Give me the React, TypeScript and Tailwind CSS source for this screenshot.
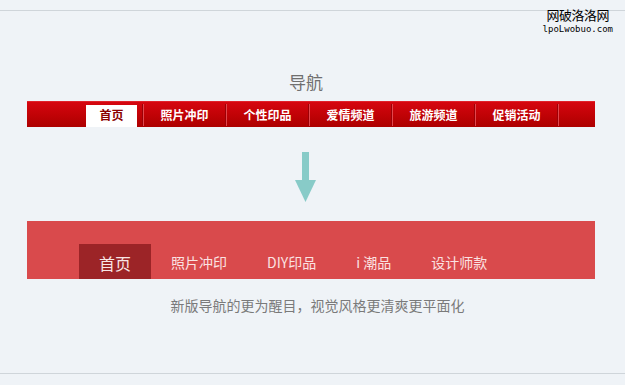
const oldNav = ['照片冲印', '个性印品', '爱情频道', '旅游频道', '促销活动'];
const newNav = ['照片冲印', 'DIY印品', 'i 潮品', '设计师款'];

function Separator() {
  return (
    <div className="flex h-[22px] self-center">
      <div className="w-px bg-[#9c0006]" />
      <div className="w-px bg-[#e2474d]" />
    </div>
  );
}

export default function App() {
  return (
    <div
      className="relative w-[625px] h-[385px] overflow-hidden bg-[#eff3f7] flex flex-col"
      style={{ fontFamily: '"Noto Sans CJK SC", "Noto Sans", sans-serif' }}
    >
      <div className="h-[10px] shrink-0" />
      <div className="h-px bg-[#cfd5da] shrink-0" />

      {/* watermark */}
      <div className="absolute right-[12px] top-[7px] flex flex-col items-center text-black">
        <span className="text-[13px] leading-[15px] tracking-[-0.5px]">网破洛洛网</span>
        <span
          className="text-[9px] leading-[11px] mt-[2px]"
          style={{ fontFamily: '"DejaVu Sans Mono", monospace' }}
        >
          lpoLwobuo.com
        </span>
      </div>

      <div className="mt-[61px] h-[20px] pr-[13px] text-center text-[17px] leading-[20px] text-[#6f6f6f]">
        导航
      </div>

      {/* old nav */}
      <div className="mt-[9px] ml-[27px] mr-[30px] h-[26px] flex bg-gradient-to-b from-[#d6060f] to-[#ad0000] border-t border-[#e0222a] pl-[59px]">
        <div className="w-[56px] flex items-end">
          <div className="w-[51px] h-[22px] bg-white flex items-center justify-center text-[12px] font-bold text-[#8a0000] pb-[3px]">
            首页
          </div>
        </div>
        <Separator />
        {oldNav.map((item) => (
          <div key={item} className="flex">
            <div className="w-[81px] flex items-center justify-center text-[12px] font-bold text-white">
              {item}
            </div>
            <Separator />
          </div>
        ))}
      </div>

      {/* arrow */}
      <div className="mt-[25px] flex justify-center pr-[13px]">
        <svg width="22" height="50" viewBox="0 0 22 50">
          <rect x="7" y="0" width="7" height="28" fill="#88cbc8" />
          <polygon points="0,28 21,28 10.5,50" fill="#88cbc8" />
        </svg>
      </div>

      {/* new nav */}
      <div className="mt-[19px] ml-[27px] mr-[30px] h-[58px] bg-[#d94a4c] flex items-end pl-[52px]">
        <div className="h-[35px] px-[20px] bg-[#9c2427] flex items-center text-[16px] text-[#f8e6e6] pt-[2px]">
          首页
        </div>
        {newNav.map((item) => (
          <div
            key={item}
            className="h-[35px] px-[20px] flex items-center text-[14px] text-[#fbe2e2] pt-[2px]"
          >
            {item}
          </div>
        ))}
      </div>

      <div className="mt-[17px] h-[18px] text-center text-[14px] leading-[18px] text-[#7a7a7a] pl-[10px]">
        新版导航的更为醒目，视觉风格更清爽更平面化
      </div>

      <div className="mt-[59px] h-px bg-[#cfd5da] shrink-0" />
    </div>
  );
}
